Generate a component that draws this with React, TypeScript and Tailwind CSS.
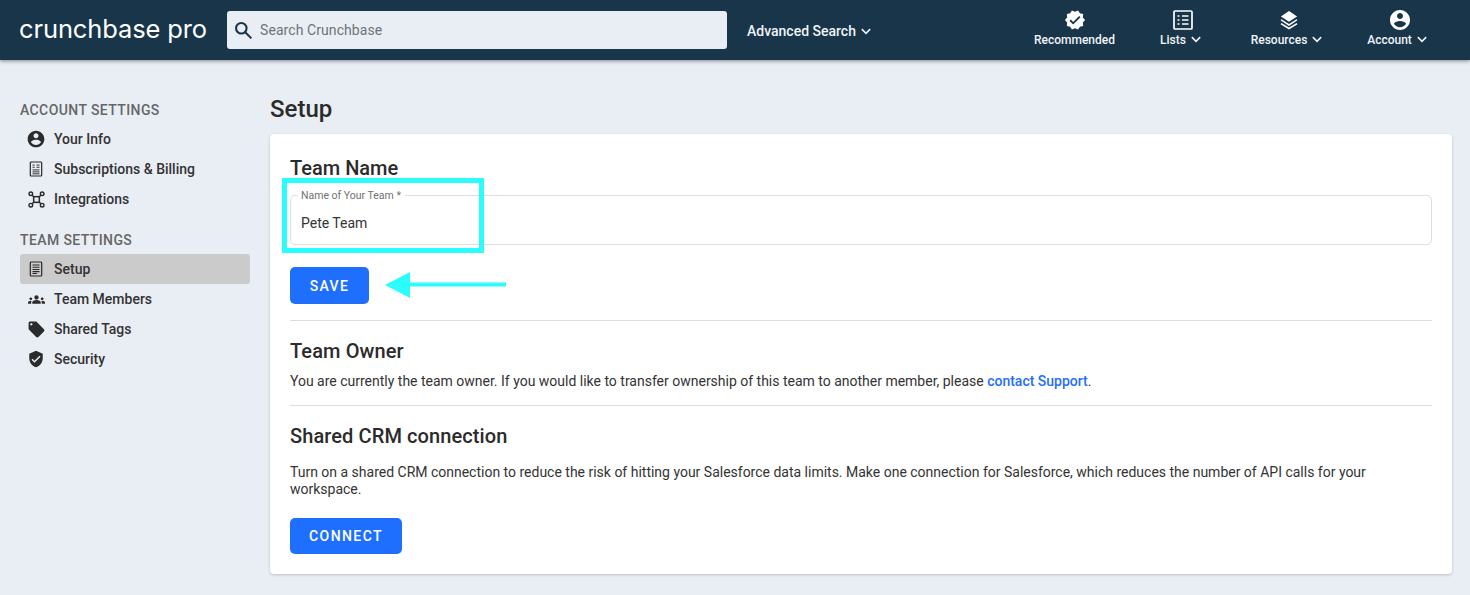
import React from "react";

const I = ({ children, cls = "" }: { children: React.ReactNode; cls?: string }) => (
  <svg viewBox="0 0 24 24" fill="currentColor" className={cls}>{children}</svg>
);

const AccountIcon = ({ cls }: { cls: string }) => (
  <I cls={cls}><path d="M12 2C6.48 2 2 6.48 2 12s4.48 10 10 10 10-4.48 10-10S17.52 2 12 2zm0 3c1.66 0 3 1.34 3 3s-1.34 3-3 3-3-1.34-3-3 1.34-3 3-3zm0 14.2c-2.5 0-4.71-1.28-6-3.22.03-1.99 4-3.08 6-3.08 1.99 0 5.97 1.09 6 3.08-1.29 1.94-3.5 3.22-6 3.22z" /></I>
);
const Chevron = () => (
  <svg viewBox="0 0 12 8" className="w-[10px] h-[7px] ml-[5px]" fill="none" stroke="currentColor" strokeWidth="1.9"><path d="M1 1.2l5 5 5-5" /></svg>
);
const DocIcon = ({ billing }: { billing?: boolean }) => (
  <svg viewBox="0 0 16 18" className="w-[14px] h-[16px]" fill="none" stroke="currentColor">
    <rect x="1.5" y="1" width="13" height="16" rx="1" strokeWidth="1.4" />
    {billing ? (
      <path d="M4 4.5h2.5M4 7h2.5M8.5 4.5h3.5M8.5 7h3.5M4 10h8M4 12.3h8M4 14.5h8" strokeWidth="1.1" />
    ) : (
      <path d="M4 4.5h8M4 7h8M4 9.5h8M4 12h8M4 14.2h5" strokeWidth="1.2" />
    )}
  </svg>
);
const IntegrationsIcon = () => (
  <svg viewBox="0 0 18 18" className="w-[17px] h-[17px]" fill="none" stroke="currentColor" strokeWidth="1.5">
    <circle cx="3" cy="3" r="1.9" /><circle cx="15" cy="3" r="1.9" /><circle cx="3" cy="15" r="1.9" /><circle cx="15" cy="15" r="1.9" />
    <path d="M4.4 4.4L6.5 6.5M13.6 4.4L11.5 6.5M4.4 13.6L6.5 11.5M13.6 13.6L11.5 11.5" />
    <rect x="6" y="6" width="6" height="6" strokeWidth="1.6" />
  </svg>
);
const TeamIcon = () => (
  <I cls="w-[17px] h-[19px]"><path d="M12 12.75c1.63 0 3.07.39 4.24.9 1.08.48 1.76 1.56 1.76 2.73V18H6v-1.61c0-1.18.68-2.26 1.76-2.73 1.17-.52 2.61-.91 4.24-.91zM4 13c1.1 0 2-.9 2-2s-.9-2-2-2-2 .9-2 2 .9 2 2 2zm1.13 1.1C4.76 14.04 4.39 14 4 14c-.99 0-1.93.21-2.78.58C.48 14.9 0 15.62 0 16.43V18h4.5v-1.61c0-.83.23-1.61.63-2.29zM20 13c1.1 0 2-.9 2-2s-.9-2-2-2-2 .9-2 2 .9 2 2 2zm4 3.43c0-.81-.48-1.53-1.22-1.85-.85-.37-1.79-.58-2.78-.58-.39 0-.76.04-1.13.1.4.68.63 1.46.63 2.29V18H24v-1.57zM12 6c1.66 0 3 1.34 3 3s-1.34 3-3 3-3-1.34-3-3 1.34-3 3-3z" /></I>
);
const TagIcon = () => (
  <I cls="w-[19px] h-[19px]"><path d="M21.41 11.58l-9-9C12.05 2.22 11.55 2 11 2H4c-1.1 0-2 .9-2 2v7c0 .55.22 1.05.59 1.42l9 9c.36.36.86.58 1.41.58.55 0 1.05-.22 1.41-.59l7-7c.37-.36.59-.86.59-1.41 0-.55-.23-1.06-.59-1.42zM5.5 7C4.67 7 4 6.33 4 5.5S4.67 4 5.5 4 7 4.67 7 5.5 6.33 7 5.5 7z" /></I>
);
const ShieldIcon = () => (
  <I cls="w-[18px] h-[18px]"><path d="M12 1L3 5v6c0 5.55 3.84 10.74 9 12 5.16-1.26 9-6.45 9-12V5l-9-4zm-2 16l-4-4 1.41-1.41L10 14.17l6.59-6.59L18 9l-8 8z" /></I>
);

const NavRow = ({ icon, label, active }: { icon: React.ReactNode; label: string; active?: boolean }) => (
  <div className={`flex items-center h-[30px] rounded-[3px] ${active ? "bg-[#cbcbcb]" : ""}`}>
    <span className="w-[32px] mr-[2px] flex justify-center text-[#2b2b2b] shrink-0">{icon}</span>
    <span className="text-[14px] font-medium text-[#333333]">{label}</span>
  </div>
);

const TopItem = ({ icon, label, chevron, cls, iconCls = "" }: { icon: React.ReactNode; label: string; chevron?: boolean; cls: string; iconCls?: string }) => (
  <div className={`flex flex-col items-center text-white ${cls}`}>
    <div className={`h-[22px] flex items-center justify-center ${iconCls}`}>{icon}</div>
    <div className="flex items-center h-[16px] mt-[1px] text-[12px] font-medium text-[#f0f3f7] whitespace-nowrap">
      {label}
      {chevron && <Chevron />}
    </div>
  </div>
);

export default function App() {
  return (
    <div className="w-[1470px] h-[595px] overflow-hidden bg-[#e9eef5] font-['Roboto',sans-serif] relative">
      <header className="h-[60px] bg-[#193549] flex items-center shadow-[0_1px_4px_rgba(0,0,0,0.45)] relative z-10">
        <div className="w-[227px] pl-[19px] shrink-0 text-white font-['Inter',sans-serif] text-[25.5px] leading-none tracking-[-0.12px] whitespace-nowrap relative -top-[1px]">crunchbase pro</div>
        <div className="w-[500px] h-[38px] bg-[#e9eef5] rounded-[3px] flex items-center shrink-0">
          <svg viewBox="0 0 24 24" className="w-[21px] h-[21px] ml-[6px] text-[#193549]" fill="none" stroke="currentColor" strokeWidth="2.4"><circle cx="9.5" cy="9.5" r="6" /><path d="M14 14l7 7" /></svg>
          <span className="ml-[6px] text-[14px] tracking-[0.08px] text-[#6f7377]">Search Crunchbase</span>
        </div>
        <div className="ml-[20px] flex items-center text-[14px] font-medium text-[#f0f3f7] mt-[2px]">
          Advanced Search
          <Chevron />
        </div>
        <div className="ml-auto flex items-start -mt-[4px]">
          <TopItem cls="w-[81px] mr-[40px]" label="Recommended" icon={<I cls="w-[22px] h-[22px]"><path d="M23 12l-2.44-2.78.34-3.68-3.61-.82-1.89-3.18L12 3 8.6 1.54 6.71 4.72l-3.61.81.34 3.68L1 12l2.44 2.78-.34 3.69 3.61.82 1.89 3.18L12 21l3.4 1.46 1.89-3.18 3.61-.82-.34-3.68L23 12zm-13 5l-4-4 1.41-1.41L10 14.17l6.59-6.59L18 9l-8 8z" /></I>} />
          <TopItem cls="w-[51px] mr-[45px]" iconCls="pl-[4px]" label="Lists" chevron icon={
            <svg viewBox="0 0 20 20" className="w-[20px] h-[20px]" fill="none" stroke="currentColor"><rect x="1" y="1" width="18" height="18" rx="1" strokeWidth="1.7" /><path d="M4.5 6h2M9 6h6.5M4.5 10h2M9 10h6.5M4.5 14h2M9 14h6.5" strokeWidth="1.7" /></svg>
          } />
          <TopItem cls="w-[71px] mr-[45px]" iconCls="pl-[4px]" label="Resources" chevron icon={
            <svg viewBox="0 0 20 22" className="w-[18px] h-[20px]" fill="currentColor"><path d="M10 1L1 7l9 6 9-6-9-6z" /><path d="M1.6 10.2L0.6 11.4 10 17.6l9.4-6.2-1-1.2L10 15.4z" /><path d="M1.6 14.4L0.6 15.6 10 21.6l9.4-6-1-1.2L10 19.4z" /></svg>
          } />
          <TopItem cls="w-[60px] mr-[43px]" iconCls="pl-[5px]" label="Account" chevron icon={<AccountIcon cls="w-[24px] h-[24px]" />} />
        </div>
      </header>

      <div className="flex">
        <aside className="w-[270px] shrink-0 pl-[20px] pr-[20px] pt-[41px]">
          <div className="text-[14px] leading-[18px] tracking-[0.4px] text-[#666666] font-medium">ACCOUNT SETTINGS</div>
          <div className="mt-[5px]">
            <NavRow icon={<AccountIcon cls="w-[20px] h-[20px]" />} label="Your Info" />
            <NavRow icon={<DocIcon billing />} label="Subscriptions & Billing" />
            <NavRow icon={<IntegrationsIcon />} label="Integrations" />
          </div>
          <div className="mt-[17px] text-[14px] leading-[18px] tracking-[0.4px] text-[#666666] font-medium">TEAM SETTINGS</div>
          <div className="mt-[5px]">
            <NavRow active icon={<DocIcon />} label="Setup" />
            <NavRow icon={<TeamIcon />} label="Team Members" />
            <NavRow icon={<TagIcon />} label="Shared Tags" />
            <NavRow icon={<ShieldIcon />} label="Security" />
          </div>
        </aside>

        <main className="w-[1182px] shrink-0">
          <h1 className="mt-[34px] text-[24px] leading-[30px] font-medium text-[#2b2b2b]">Setup</h1>
          <section className="mt-[10px] bg-white rounded-[4px] shadow-[0_1px_3px_rgba(0,0,0,0.2)] px-[20px] h-[440px] relative">
            <h2 className="pt-[22px] text-[20px] leading-[24px] font-medium text-[#2b2b2b]">Team Name</h2>
            <div className="mt-[15px] h-[50px] border border-[#dddddd] rounded-[5px] relative flex items-center pl-[10px] pt-[7px]">
              <span className="absolute -top-[6px] left-[6px] bg-white px-[4px] text-[10.5px] leading-[12px] text-[#707070]">Name of Your Team *</span>
              <span className="text-[14px] text-[#333333]">Pete Team</span>
            </div>
            <button className="mt-[22px] block w-[79px] h-[37px] pt-[1px] rounded-[5px] bg-[#1f6fff] text-white text-[14px] font-medium tracking-[1.4px]">SAVE</button>
            <div className="mt-[16px] border-t border-[#dddddd]" />
            <h2 className="mt-[18px] text-[20px] leading-[24px] font-medium tracking-[0.1px] text-[#2b2b2b]">Team Owner</h2>
            <p className="mt-[8px] text-[14px] leading-[20px] tracking-[-0.005px] text-[#333333]">
              You are currently the team owner. If you would like to transfer ownership of this team to another member, please <span className="text-[#1f6fff] font-medium">contact Support</span>.
            </p>
            <div className="mt-[14px] border-t border-[#dddddd]" />
            <h2 className="mt-[18px] text-[20px] leading-[24px] font-medium tracking-[0.1px] text-[#2b2b2b]">Shared CRM connection</h2>
            <p className="mt-[16px] text-[14px] leading-[17px] tracking-[-0.005px] text-[#333333]">
              Turn on a shared CRM connection to reduce the risk of hitting your Salesforce data limits. Make one connection for Salesforce, which reduces the number of API calls for your workspace.
            </p>
            <button className="mt-[20px] block w-[112px] h-[36px] pt-[1px] rounded-[5px] bg-[#1f6fff] text-white text-[14px] font-medium tracking-[1.4px]">CONNECT</button>

            <div className="absolute left-[12px] top-[44px] w-[202px] h-[75px] border-[5px] border-[#2bfdff] pointer-events-none" />
            <svg viewBox="0 0 122 26" className="absolute left-[115px] top-[138px] w-[122px] h-[26px] pointer-events-none">
              <path d="M0 13L25 0v10.5h96v4H25V26z" fill="#2bfdff" />
            </svg>
          </section>
        </main>
      </div>
    </div>
  );
}
